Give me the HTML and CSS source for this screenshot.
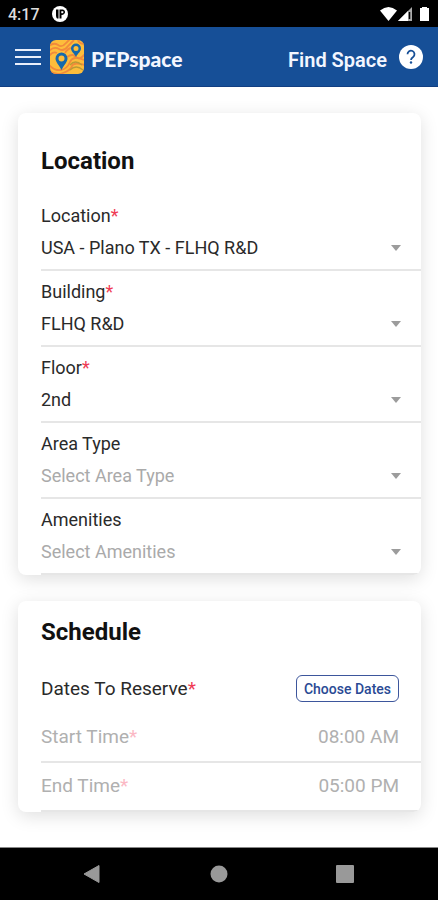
FILE: index.html
```html
<!DOCTYPE html>
<html lang="en">
<head>
<meta charset="utf-8">
<meta name="viewport" content="width=device-width, initial-scale=1">
<title>PEPspace</title>
<link rel="stylesheet" href="styles.css">
</head>
<body>
<div class="status-bar">
  <span class="clock">4:17</span>
  <svg class="status-app" width="16" height="16" viewBox="0 0 16 16" aria-hidden="true">
    <circle cx="8" cy="8" r="8" fill="#fff"/>
    <path d="M4 3.500h2.500v9H5q-1-1-1-3zM7.500 3.500H11a2.500 2.500 0 0 1 1 4.500q-.6 1-2.500 1v3.500h-2z" fill="#000"/>
    <path d="M9.300 5.200h2v2h-2z" fill="#fff"/>
  </svg>
  <svg class="status-icons" width="50" height="16" viewBox="0 0 50 16" aria-hidden="true">
    <path d="M0 4.500Q8.500-2.500 17 4.500L8.500 15z" fill="#fff"/>
    <path d="M32 1v14H18z" fill="#aaa"/>
    <path d="M28 5v10H18z" fill="#fff"/>
    <path d="M29.500 6v7" stroke="#000" stroke-width="1.500"/>
    <path d="M42 2V1h5v1h2v13h-9V2z" fill="#fff"/>
  </svg>
</div>
<header class="app-bar">
  <button class="icon-button" type="button" aria-label="Menu">
    <svg width="26" height="18" viewBox="0 0 26 18"><path d="M0 2h26M0 9h26M0 16h26" stroke="#e9effb" stroke-width="2"/></svg>
  </button>
  <svg class="logo" width="36" height="36" viewBox="0 0 36 36" aria-hidden="true">
    <clipPath id="tile"><rect x="1" y="1" width="34" height="34" rx="6"/></clipPath>
    <g clip-path="url(#tile)">
      <rect width="36" height="36" fill="#fdbd3b"/>
      <g fill="none" stroke="#f18a3c" stroke-width="1.800">
        <path d="M0 7Q5 3 9 6T17 4L21 0"/>
        <path d="M0 12Q5 7 10 10T19 7L25 1"/>
        <path d="M0 17Q4 12 8 14M16 14Q19 9 23 9"/>
        <path d="M0 26Q6 32 12 31T21 23T35 21"/>
        <path d="M0 31Q6 37 14 34T23 27T36 26"/>
        <path d="M18 18Q24 14 27 18T36 15"/>
        <path d="M29 1Q30 5 36 5"/>
      </g>
      <g fill="none" stroke="#b99a35" stroke-width="1.300">
        <path d="M21 26Q26 20 33 26"/>
        <path d="M21 31Q27 25 34 31"/>
      </g>
      <path fill="#1769aa" fill-rule="evenodd" d="M12.500 31C10 26 6.500 23 6.500 19.500a6 6 0 0 1 12 0C18.500 23 15 26 12.500 31zM12.500 16.500a3 3 0 1 0 0 6 3 3 0 0 0 0-6z"/>
      <path fill="#1769aa" fill-rule="evenodd" d="M27 18C25 14 22 12.500 22 9.500a5 5 0 0 1 10 0C32 12.500 29 14 27 18zM27 7a2.500 2.500 0 1 0 0 5 2.500 2.500 0 0 0 0-5z"/>
    </g>
  </svg>
  <span class="brand">PEPspace</span>
  <h1 class="page-title">Find Space</h1>
  <button class="icon-button" type="button" aria-label="Help">
    <svg width="24" height="24" viewBox="0 0 24 24"><circle cx="12" cy="12" r="12" fill="#fff"/><path d="M8.500 9.300a3.500 3.500 0 1 1 5.600 2.700C12.600 13 12 13.500 12 15" fill="none" stroke="#164f97" stroke-width="1.800"/><circle cx="12" cy="17.500" r="1.200" fill="#164f97"/></svg>
  </button>
</header>
<main class="content">
  <section class="card">
    <h2 class="card-title card-title-tall">Location</h2>
    <div class="field">
      <label for="location">Location<span class="required">*</span></label>
      <div class="picker">
        <select id="location"><option>USA - Plano TX - FLHQ R&amp;D</option></select>
        <svg class="caret" width="10" height="6" viewBox="0 0 10 6" aria-hidden="true"><path d="M0 0h10L5 6z"/></svg>
      </div>
    </div>
    <div class="field">
      <label for="building">Building<span class="required">*</span></label>
      <div class="picker">
        <select id="building"><option>FLHQ R&amp;D</option></select>
        <svg class="caret" width="10" height="6" viewBox="0 0 10 6" aria-hidden="true"><path d="M0 0h10L5 6z"/></svg>
      </div>
    </div>
    <div class="field">
      <label for="floor">Floor<span class="required">*</span></label>
      <div class="picker">
        <select id="floor"><option>2nd</option></select>
        <svg class="caret" width="10" height="6" viewBox="0 0 10 6" aria-hidden="true"><path d="M0 0h10L5 6z"/></svg>
      </div>
    </div>
    <div class="field">
      <label for="area">Area Type</label>
      <div class="picker">
        <select id="area" class="empty"><option>Select Area Type</option></select>
        <svg class="caret" width="10" height="6" viewBox="0 0 10 6" aria-hidden="true"><path d="M0 0h10L5 6z"/></svg>
      </div>
    </div>
    <div class="field">
      <label for="amenities">Amenities</label>
      <div class="picker">
        <select id="amenities" class="empty"><option>Select Amenities</option></select>
        <svg class="caret" width="10" height="6" viewBox="0 0 10 6" aria-hidden="true"><path d="M0 0h10L5 6z"/></svg>
      </div>
    </div>
  </section>
  <section class="card">
    <h2 class="card-title">Schedule</h2>
    <div class="row dates">
      <span>Dates To Reserve<span class="required">*</span></span>
      <button class="choose" type="button">Choose Dates</button>
    </div>
    <div class="row time">
      <label for="start">Start Time<span class="required">*</span></label>
      <input id="start" type="text" value="08:00 AM" disabled>
    </div>
    <div class="row time">
      <label for="end">End Time<span class="required">*</span></label>
      <input id="end" type="text" value="05:00 PM" disabled>
    </div>
  </section>
</main>
<nav class="system-nav" aria-label="System">
  <button class="icon-button" type="button" aria-label="Back"><svg width="18" height="20" viewBox="0 0 18 20"><path d="M1 10L16 1.500v17z" fill="#999" stroke="#999" stroke-linejoin="round"/></svg></button>
  <button class="icon-button" type="button" aria-label="Home"><svg width="18" height="18" viewBox="0 0 18 18"><circle cx="9" cy="9" r="8.500" fill="#999"/></svg></button>
  <button class="icon-button" type="button" aria-label="Recent apps"><svg width="18" height="18" viewBox="0 0 18 18"><rect width="18" height="18" rx="1" fill="#999"/></svg></button>
</nav>
</body>
</html>
```
FILE: styles.css
```css
* {
  box-sizing: border-box;
}

body {
  margin: 0;
  min-height: 100vh;
  display: flex;
  flex-direction: column;
  background: #fff;
  color: #2a2a2a;
  font-family: Roboto, "Liberation Sans", sans-serif;
  font-size: 18px;
  line-height: 22px;
}

button,
input,
select {
  font: inherit;
  color: inherit;
}

svg {
  display: block;
}

.status-bar {
  display: flex;
  align-items: center;
  height: 27px;
  padding: 0 8px;
  background: #000;
  color: #ddd;
  font-size: 16px;
  font-weight: 500;
}

.clock {
  padding-top: 2px;
}

.status-app {
  margin-left: 12px;
}

.status-icons {
  margin-left: auto;
}

.app-bar {
  display: flex;
  align-items: center;
  height: 60px;
  padding: 0 15px;
  background: #164f97;
  border-bottom: 1px solid #123f82;
  color: #f3f6ff;
}

.icon-button {
  padding: 0;
  border: 0;
  background: none;
}

.logo {
  margin-left: 8px;
}

.brand {
  margin-left: 6px;
  padding-top: 4px;
  font-family: Lato, sans-serif;
  font-size: 21px;
  font-weight: 900;
}

.page-title {
  margin: 0 12px 0 auto;
  padding-top: 6px;
  font-size: 20px;
  font-weight: 600;
}

.content {
  flex: 1;
  display: flex;
  flex-direction: column;
  gap: 26px;
  padding: 26px 17px 30px 18px;
}

.card {
  padding-left: 23px;
  border-radius: 8px;
  background: #fff;
  box-shadow: 0 4px 18px rgba(0, 0, 0, 0.13);
  overflow: hidden;
}

.card-title {
  margin: 0;
  padding: 17px 0;
  color: #111;
  font-size: 24px;
  font-weight: 700;
  line-height: 28px;
}

.card-title-tall {
  padding: 34px 0 20px;
}

.field {
  padding-top: 10px;
  border-bottom: 2px solid #e6e6e6;
}

.field label {
  display: block;
}

.required {
  color: #ef3b54;
}

.picker {
  display: grid;
  align-items: center;
}

.picker > * {
  grid-area: 1 / 1;
}

select {
  width: 100%;
  height: 42px;
  padding: 0 42px 0 0;
  border: 0;
  appearance: none;
  background: none;
}

.caret {
  justify-self: end;
  margin-right: 20px;
  fill: #9c9c9c;
  pointer-events: none;
}

.empty {
  color: #aaa;
}

.row {
  display: flex;
  align-items: center;
  justify-content: space-between;
  padding-right: 22px;
  font-size: 19px;
}

.dates {
  height: 51px;
}

.choose {
  height: 27px;
  padding: 0 7px;
  border: 1px solid #3d569c;
  border-radius: 6px;
  background: #fff;
  color: #2a4a94;
  font-size: 14px;
  font-weight: 500;
  line-height: 20px;
}

.time {
  height: 49px;
  padding-bottom: 2px;
  border-bottom: 2px solid #e6e6e6;
  color: #b0b0b0;
}

.time .required {
  color: #fbb8c4;
}

.time input {
  width: 120px;
  padding: 0;
  border: 0;
  background: none;
  text-align: right;
}

.system-nav {
  display: flex;
  align-items: center;
  justify-content: space-between;
  height: 53px;
  padding: 0 84px 0 83px;
  border-top: 1px solid #888;
  background: #000;
}
```
